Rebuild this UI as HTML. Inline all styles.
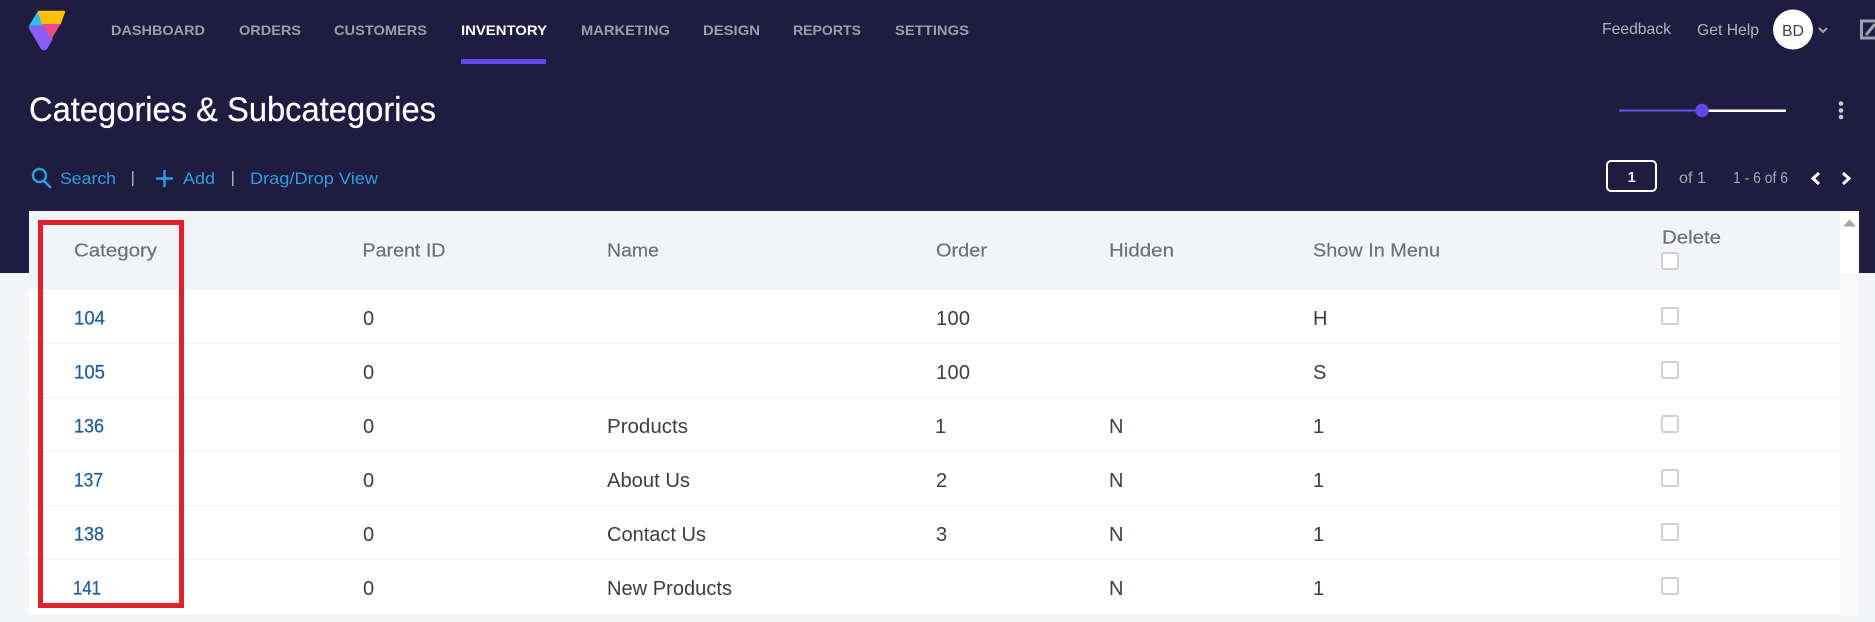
<!DOCTYPE html>
<html lang="en">
<head>
<meta charset="utf-8">
<title>Categories &amp; Subcategories</title>
<style>
html,body{margin:0;padding:0;width:1875px;height:622px;overflow:hidden;background:#f4f5f8}
svg{display:block}
text{font-family:"Liberation Sans",sans-serif}
.nav{font-size:14px;font-weight:700;fill:#9d9cae}
.link{font-size:17px;fill:#2a9fe2}
.th{font-size:18.5px;fill:#6d7079;stroke:#6d7079;stroke-width:.2}
.td{font-size:20px;fill:#3a3d44}
.id{font-size:19px;fill:#1f5d9c;stroke:#1f5d9c;stroke-width:.25}
.sub{font-size:15.5px;fill:#a6a5b8}
.cb{fill:#fff;stroke:#cfcfd1;stroke-width:2}
.sep{stroke:#f3f3f5;stroke-width:1.5}
</style>
</head>
<body>
<svg width="1875" height="622" viewBox="0 0 1875 622" xmlns="http://www.w3.org/2000/svg">
<rect width="1875" height="273" fill="#1f1c40"/>
<rect y="273" width="1875" height="349" fill="#f4f5f8"/>

<!-- logo -->
<path d="M30 25H43L52 39L46.500 48.500Q44 51 41.500 48.500L29.500 28Z" fill="#8b5cf0" stroke="#8b5cf0" stroke-width="1.500" stroke-linejoin="round"/>
<path d="M37.500 12.500L43 25H30Z" fill="#29bdf0" stroke="#29bdf0" stroke-width="1" stroke-linejoin="round"/>
<path d="M38.500 11.500H64.500L60 24H42.500Z" fill="#ffc107" stroke="#ffc107" stroke-width="1.500" stroke-linejoin="round"/>
<path d="M42.500 24H60.500L51.500 39Z" fill="#f4478a"/>

<!-- nav -->
<text class="nav" x="111" y="35" textLength="94" lengthAdjust="spacingAndGlyphs">DASHBOARD</text>
<text class="nav" x="239" y="35" textLength="62" lengthAdjust="spacingAndGlyphs">ORDERS</text>
<text class="nav" x="334" y="35" textLength="93" lengthAdjust="spacingAndGlyphs">CUSTOMERS</text>
<text class="nav" x="461" y="35" textLength="86" lengthAdjust="spacingAndGlyphs" style="fill:#fff">INVENTORY</text>
<text class="nav" x="581" y="35" textLength="89" lengthAdjust="spacingAndGlyphs">MARKETING</text>
<text class="nav" x="703" y="35" textLength="57" lengthAdjust="spacingAndGlyphs">DESIGN</text>
<text class="nav" x="793" y="35" textLength="68" lengthAdjust="spacingAndGlyphs">REPORTS</text>
<text class="nav" x="895" y="35" textLength="74" lengthAdjust="spacingAndGlyphs">SETTINGS</text>
<rect x="461" y="59" width="85" height="5" fill="#6347ea"/>

<!-- top right -->
<text x="1602" y="34" font-size="16" fill="#b3b2c2" textLength="69" lengthAdjust="spacingAndGlyphs">Feedback</text>
<text x="1697" y="35" font-size="16" fill="#b3b2c2" textLength="62" lengthAdjust="spacingAndGlyphs">Get Help</text>
<circle cx="1793" cy="29.500" r="20" fill="#fff"/>
<text x="1782" y="36" font-size="15.500" fill="#3f3d4e" textLength="22" lengthAdjust="spacingAndGlyphs">BD</text>
<path d="M1819 28L1823 32L1827 28" fill="none" stroke="#9d9cb0" stroke-width="2.200"/>
<path d="M1870 21H1861.500V38H1880" fill="none" stroke="#9d9cb0" stroke-width="3"/>
<path d="M1866 35L1875 24M1870 21H1878" fill="none" stroke="#9d9cb0" stroke-width="3"/>

<!-- title -->
<text x="29" y="121" font-size="34.500px" fill="#fff" stroke="#fff" stroke-width=".2" textLength="407" lengthAdjust="spacingAndGlyphs">Categories &amp; Subcategories</text>

<!-- slider -->
<rect x="1619" y="109.500" width="84" height="2" fill="#6a4ff0"/>
<rect x="1702" y="109.500" width="84" height="2.500" fill="#fff"/>
<circle cx="1702" cy="110.500" r="6.800" fill="#6347ea"/>
<circle cx="1841" cy="103.500" r="2.300" fill="#c9c8d6"/>
<circle cx="1841" cy="110.500" r="2.300" fill="#c9c8d6"/>
<circle cx="1841" cy="117" r="2.300" fill="#c9c8d6"/>

<!-- toolbar -->
<circle cx="39.500" cy="175.500" r="6.500" fill="none" stroke="#2a9fe2" stroke-width="2.400"/>
<path d="M44 181L51 188" stroke="#2a9fe2" stroke-width="2.600"/>
<text class="link" x="60" y="184" textLength="56" lengthAdjust="spacingAndGlyphs">Search</text>
<rect x="132" y="171" width="1.500" height="15" fill="#a9a8b8"/>
<path d="M156 178.500H173M164.500 170V187" stroke="#2a9fe2" stroke-width="2.400"/>
<text class="link" x="183" y="184" textLength="32" lengthAdjust="spacingAndGlyphs">Add</text>
<rect x="232" y="171" width="1.500" height="15" fill="#a9a8b8"/>
<text class="link" x="250" y="184" textLength="128" lengthAdjust="spacingAndGlyphs">Drag/Drop View</text>

<!-- pagination -->
<rect x="1607" y="161" width="49" height="30" rx="4" fill="#1f1c40" stroke="#fff" stroke-width="2"/>
<text x="1627.500" y="182" font-size="15" font-weight="700" fill="#e8e8ee">1</text>
<text class="sub" x="1679" y="183" textLength="27" lengthAdjust="spacingAndGlyphs">of 1</text>
<text class="sub" x="1733" y="183" textLength="55" lengthAdjust="spacingAndGlyphs">1 - 6 of 6</text>
<path d="M1819 173L1813 178.500L1819 184" fill="none" stroke="#fff" stroke-width="3"/>
<path d="M1843 173L1849 178.500L1843 184" fill="none" stroke="#fff" stroke-width="3"/>

<!-- card -->
<rect x="29" y="211" width="1811" height="403" rx="2" fill="#fff"/>
<rect x="1840" y="211" width="19" height="62" fill="#fff"/>
<rect x="1840" y="273" width="19" height="344" fill="#f9f9fa"/>
<path d="M1843 226.500L1849.500 219.500L1856 226.500Z" fill="#a5a5a5"/>
<rect x="29" y="211" width="1811" height="79" fill="#f3f4f7"/>

<text class="th" x="74" y="256.500" textLength="83" lengthAdjust="spacingAndGlyphs">Category</text>
<text class="th" x="362.500" y="256.500" textLength="83" lengthAdjust="spacingAndGlyphs">Parent ID</text>
<text class="th" x="607" y="256.500" textLength="52" lengthAdjust="spacingAndGlyphs">Name</text>
<text class="th" x="936" y="256.500" textLength="51" lengthAdjust="spacingAndGlyphs">Order</text>
<text class="th" x="1109" y="256.500" textLength="65" lengthAdjust="spacingAndGlyphs">Hidden</text>
<text class="th" x="1313" y="256.500" textLength="127" lengthAdjust="spacingAndGlyphs">Show In Menu</text>
<text class="th" x="1662" y="243.500" textLength="59" lengthAdjust="spacingAndGlyphs">Delete</text>
<rect class="cb" x="1662" y="253" width="16" height="16" rx="1.500"/>

<!-- separators -->
<path class="sep" d="M29 343.500H1840M29 397.500H1840M29 451.500H1840M29 505.500H1840M29 559.500H1840"/>

<!-- rows -->
<text class="id" x="74" y="324.500" textLength="31" lengthAdjust="spacingAndGlyphs">104</text>
<text class="td" x="363" y="325">0</text>
<text class="td" x="936" y="325" textLength="34" lengthAdjust="spacing">100</text>
<text class="td" x="1313" y="325">H</text>
<rect class="cb" x="1662" y="308" width="16" height="16" rx="1.500"/>

<text class="id" x="74" y="378.500" textLength="31" lengthAdjust="spacingAndGlyphs">105</text>
<text class="td" x="363" y="379">0</text>
<text class="td" x="936" y="379" textLength="34" lengthAdjust="spacing">100</text>
<text class="td" x="1313" y="379">S</text>
<rect class="cb" x="1662" y="362" width="16" height="16" rx="1.500"/>

<text class="id" x="74" y="432.500" textLength="30" lengthAdjust="spacingAndGlyphs">136</text>
<text class="td" x="363" y="433">0</text>
<text class="td" x="607" y="433" textLength="81" lengthAdjust="spacingAndGlyphs">Products</text>
<text class="td" x="935" y="433">1</text>
<text class="td" x="1109" y="433">N</text>
<text class="td" x="1313" y="433">1</text>
<rect class="cb" x="1662" y="416" width="16" height="16" rx="1.500"/>

<text class="id" x="74" y="486.500" textLength="29" lengthAdjust="spacingAndGlyphs">137</text>
<text class="td" x="363" y="487">0</text>
<text class="td" x="607" y="487" textLength="83" lengthAdjust="spacingAndGlyphs">About Us</text>
<text class="td" x="936" y="487">2</text>
<text class="td" x="1109" y="487">N</text>
<text class="td" x="1313" y="487">1</text>
<rect class="cb" x="1662" y="470" width="16" height="16" rx="1.500"/>

<text class="id" x="74" y="540.500" textLength="30" lengthAdjust="spacingAndGlyphs">138</text>
<text class="td" x="363" y="541">0</text>
<text class="td" x="607" y="541" textLength="99" lengthAdjust="spacingAndGlyphs">Contact Us</text>
<text class="td" x="936" y="541">3</text>
<text class="td" x="1109" y="541">N</text>
<text class="td" x="1313" y="541">1</text>
<rect class="cb" x="1662" y="524" width="16" height="16" rx="1.500"/>

<text class="id" x="73" y="594.500" textLength="28" lengthAdjust="spacingAndGlyphs">141</text>
<text class="td" x="363" y="595">0</text>
<text class="td" x="607" y="595" textLength="125" lengthAdjust="spacingAndGlyphs">New Products</text>
<text class="td" x="1109" y="595">N</text>
<text class="td" x="1313" y="595">1</text>
<rect class="cb" x="1662" y="578" width="16" height="16" rx="1.500"/>

<!-- red annotation -->
<rect x="40.500" y="222.500" width="141" height="383" fill="none" stroke="#e1202c" stroke-width="5"/>
</svg>
</body>
</html>
